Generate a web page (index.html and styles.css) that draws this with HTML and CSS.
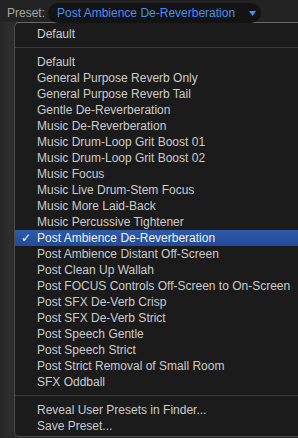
FILE: index.html
```html
<!DOCTYPE html>
<html>
<head>
<meta charset="utf-8">
<link rel="stylesheet" href="styles.css">
</head>
<body>
<div class="page">
  <div class="header">
    <span class="label">Preset:</span>
    <div class="pill">
      <span class="pill-text">Post Ambience De-Reverberation</span>
      <svg class="arrow" width="7" height="5" viewBox="0 0 7 5"><path d="M0 0 H7 L3.5 5 Z" fill="#4a8ef2"/></svg>
    </div>
  </div>
  <div class="menu">
    <div class="item">Default</div>
    <div class="sep"></div>
    <div class="item">Default</div>
    <div class="item">General Purpose Reverb Only</div>
    <div class="item">General Purpose Reverb Tail</div>
    <div class="item">Gentle De-Reverberation</div>
    <div class="item">Music De-Reverberation</div>
    <div class="item">Music Drum-Loop Grit Boost 01</div>
    <div class="item">Music Drum-Loop Grit Boost 02</div>
    <div class="item">Music Focus</div>
    <div class="item">Music Live Drum-Stem Focus</div>
    <div class="item">Music More Laid-Back</div>
    <div class="item">Music Percussive Tightener</div>
    <div class="item selected"><span class="check">✓</span>Post Ambience De-Reverberation</div>
    <div class="item">Post Ambience Distant Off-Screen</div>
    <div class="item">Post Clean Up Wallah</div>
    <div class="item">Post FOCUS Controls Off-Screen to On-Screen</div>
    <div class="item">Post SFX De-Verb Crisp</div>
    <div class="item">Post SFX De-Verb Strict</div>
    <div class="item">Post Speech Gentle</div>
    <div class="item">Post Speech Strict</div>
    <div class="item">Post Strict Removal of Small Room</div>
    <div class="item">SFX Oddball</div>
    <div class="sep"></div>
    <div class="item">Reveal User Presets in Finder...</div>
    <div class="item">Save Preset...</div>
  </div>
</div>
</body>
</html>
```
FILE: styles.css
```css
html, body {
  margin: 0;
  padding: 0;
  background: #2a2a2a;
  overflow: hidden;
}
.page {
  width: 298px;
  height: 438px;
  font-family: "Liberation Sans", Arial, sans-serif;
  font-size: 12px;
  background: linear-gradient(90deg, #272727 0, #2e2e2e 10px, #2a2a2a 14px);
}
.header {
  height: 22px;
  display: flex;
  align-items: flex-start;
  padding-left: 7px;
  background: #232323;
  box-sizing: border-box;
}
.label {
  color: #a6a6a6;
  line-height: 26px;
  width: 41px;
}
.pill {
  margin-top: 3px;
  width: 213px;
  height: 20px;
  border-radius: 10px;
  background: #131313;
  display: flex;
  align-items: center;
  padding: 0 5px 0 9px;
  box-sizing: border-box;
}
.pill-text {
  color: #4a8ef2;
  flex: 1;
  line-height: 20px;
}
.arrow {
  display: block;
  margin-top: 1px;
}
.menu {
  margin-left: 14px;
  width: 284px;
  height: 415px;
  box-sizing: border-box;
  border: 1px solid #4c4c4c;
  border-top-color: #6a6a6a;
  border-right: none;
  border-radius: 5px 0 0 5px;
  background: #1b1b1b;
  padding-top: 3px;
  overflow: hidden;
}
.item {
  height: 16px;
  line-height: 16px;
  padding-left: 22px;
  color: #cbcbcb;
  white-space: nowrap;
  position: relative;
}
.item.selected {
  background: linear-gradient(#2e5aa8, #214b98);
  color: #f0f0f0;
}
.check {
  position: absolute;
  left: 6px;
  top: 0;
  color: #ffffff;
  font-family: "DejaVu Sans", sans-serif;
  font-size: 12px;
}
.sep {
  height: 12px;
  box-sizing: border-box;
  padding-top: 5px;
}
.sep::before {
  content: "";
  display: block;
  height: 1px;
  background: #3a3a3a;
}
```
